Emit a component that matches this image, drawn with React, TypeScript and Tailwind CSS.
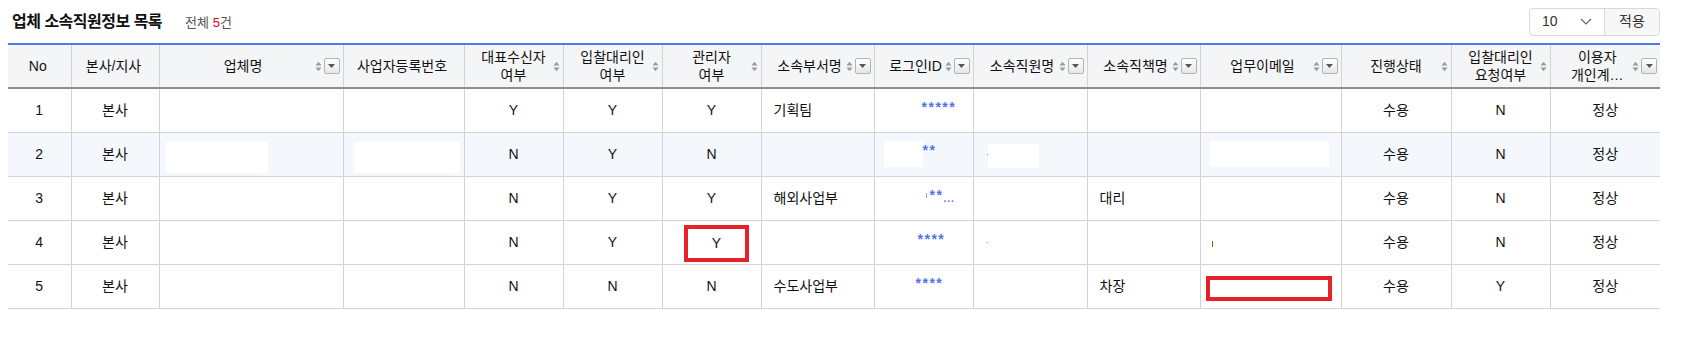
import React from "react";

type Col = {
  label: string[];
  sort?: boolean;
  filter?: boolean;
};

const cols: Col[] = [
  { label: ["No"] },
  { label: ["본사/지사"] },
  { label: ["업체명"], sort: true, filter: true },
  { label: ["사업자등록번호"] },
  { label: ["대표수신자", "여부"], sort: true },
  { label: ["입찰대리인", "여부"], sort: true },
  { label: ["관리자", "여부"], sort: true },
  { label: ["소속부서명"], sort: true, filter: true },
  { label: ["로그인ID"], sort: true, filter: true },
  { label: ["소속직원명"], sort: true, filter: true },
  { label: ["소속직책명"], sort: true, filter: true },
  { label: ["업무이메일"], sort: true, filter: true },
  { label: ["진행상태"], sort: true },
  { label: ["입찰대리인", "요청여부"], sort: true },
  { label: ["이용자", "개인계…"], sort: true, filter: true },
];

function SortIcon() {
  return (
    <svg width="7" height="11" viewBox="0 0 7 11" className="shrink-0">
      <path d="M0.5 4.5 L3.5 0.8 L6.5 4.5 Z" fill="#9b9b9b" />
      <path d="M0.5 6.5 L3.5 10.2 L6.5 6.5 Z" fill="#9b9b9b" />
    </svg>
  );
}

function FilterBox() {
  return (
    <span className="flex h-[16px] w-[16px] shrink-0 items-center justify-center rounded-[2px] border border-[#b3b3b3] bg-gradient-to-b from-white to-[#e6e6e6]">
      <svg width="7" height="4" viewBox="0 0 7 4">
        <path d="M0 0 L7 0 L3.5 4 Z" fill="#555" />
      </svg>
    </span>
  );
}

function HeadCell({ col, last }: { col: Col; last?: boolean }) {
  return (
    <th
      className={`h-[44px] bg-[#f4f5f7] p-0 font-normal border-b-2 border-b-[#8e8e8e] ${
        last ? "" : "border-r border-r-[#d3d3d3]"
      }`}
    >
      <div className="flex items-center pr-[3px]">
        {col.filter ? <span className="w-[12px] shrink-0" /> : col.sort ? <span className="w-[10px] shrink-0" /> : null}
        <div className="flex-1 text-center text-[14px] leading-[18px] text-[#111]">
          {col.label.map((l, i) => (
            <div key={i}>{l}</div>
          ))}
        </div>
        {(col.sort || col.filter) && (
          <div className="flex items-center gap-[2px]">
            {col.sort && <SortIcon />}
            {col.filter && <FilterBox />}
          </div>
        )}
      </div>
    </th>
  );
}

function Blank({ ml, w, h, mt = 0 }: { ml: string; w: string; h: string; mt?: number }) {
  return <div className={`${ml} ${w} ${h} ${mt ? "mt-[6px]" : ""} bg-white`} />;
}

function Stars({ pl, children }: { pl: string; children: React.ReactNode }) {
  return (
    <div className={`flex items-center ${pl} text-[14px] tracking-[1.5px] text-[#4f74ee] font-bold -mt-[6px]`}>
      {children}
    </div>
  );
}

type Row = React.ReactNode[];

const rows: Row[] = [
  [
    "1", "본사", "", "", "Y", "Y", "Y", "기획팀",
    <Stars pl="pl-[47px]">*****</Stars>,
    "", "", "", "수용", "N", "정상",
  ],
  [
    "2", "본사",
    <Blank ml="ml-[6px]" w="w-[102px]" h="h-[31px]" mt={1} />,
    <Blank ml="ml-[10px]" w="w-[106px]" h="h-[31px]" mt={1} />,
    "N", "Y", "N", "",
    <div className="flex items-center pl-[9px]">
      <div className="h-[26px] w-[39px] bg-white" />
      <span className="-mt-[8px] text-[14px] font-bold tracking-[1.5px] text-[#4f74ee]">**</span>
    </div>,
    <div className="flex items-center pl-[13px]">
      <span className="h-[1px] w-[1px] bg-[#8f7bd6]" />
      <div className="mt-[4px] h-[24px] w-[51px] bg-white" />
    </div>,
    "",
    <Blank ml="ml-[9px]" w="w-[119px]" h="h-[26px]" />,
    "수용", "N", "정상",
  ],
  [
    "3", "본사", "", "", "N", "Y", "Y", "해외사업부",
    <div className="-mt-[6px] flex items-center pl-[51px] text-[#4f74ee]">
      <span className="mr-[3px] h-[5px] w-[1px] bg-[#8aa0f2]" />
      <span className="text-[14px] font-bold tracking-[1.5px]">**</span>
      <span className="mt-[6px] text-[10px] font-bold tracking-[1px]">...</span>
    </div>,
    "", "대리", "", "수용", "N", "정상",
  ],
  [
    "4", "본사", "", "", "N", "Y",
    <div className="flex justify-center">
      <div className="ml-[10px] mt-[3px] flex h-[37px] w-[65px] items-center justify-center border-4 border-[#e8202a]">
        Y
      </div>
    </div>,
    "",
    <Stars pl="pl-[43px]">****</Stars>,
    <div className="flex pl-[13px]">
      <span className="h-[1px] w-[1px] bg-[#8f7bd6]" />
    </div>,
    "",
    <div className="flex pl-[11px]">
      <span className="mt-[4px] h-[6px] w-[1.5px] bg-[#9a5a16]" />
    </div>,
    "수용", "N", "정상",
  ],
  [
    "5", "본사", "", "", "N", "N", "N", "수도사업부",
    <Stars pl="pl-[41px]">****</Stars>,
    "", "차장",
    <div className="ml-[5px] mt-[4px] h-[25px] w-[126px] border-4 border-[#e8202a] bg-white" />,
    "수용", "Y", "정상",
  ],
];

export default function App() {
  return (
    <div className="h-[345px] w-[1682px] bg-white font-['Liberation_Sans','Noto_Sans_CJK_KR',sans-serif] text-[#111]">
      <div className="flex h-[43px] items-center justify-between pl-[12px] pr-[22px]">
        <div className="flex items-baseline">
          <h2 className="text-[16px] font-bold tracking-[-0.5px] text-[#111]">업체 소속직원정보 목록</h2>
          <span className="ml-[23px] text-[13px] text-[#555]">
            전체 <span className="text-[#e60012]">5</span>건
          </span>
        </div>
        <div className="flex h-[28px] items-stretch overflow-hidden rounded-[4px] border border-[#d9d9d9] text-[14px]">
          <div className="flex w-[75px] items-center justify-between border-r border-[#d9d9d9] pl-[12px] pr-[12px] text-[#333]">
            <span>10</span>
            <svg width="12" height="7" viewBox="0 0 12 7">
              <path d="M1 1 L6 6 L11 1" fill="none" stroke="#666" strokeWidth="1.2" />
            </svg>
          </div>
          <div className="flex w-[54px] items-center justify-center bg-[#f7f7f7] text-[#333]">적용</div>
        </div>
      </div>

      <table className="ml-[8px] w-[1652px] table-fixed border-collapse border-t-2 border-t-[#4a7ce8]">
        <colgroup>
          <col className="w-[63px]" />
          <col className="w-[88px]" />
          <col className="w-[184px]" />
          <col className="w-[121px]" />
          <col className="w-[99px]" />
          <col className="w-[99px]" />
          <col className="w-[99px]" />
          <col className="w-[113px]" />
          <col className="w-[99px]" />
          <col className="w-[114px]" />
          <col className="w-[113px]" />
          <col className="w-[141px]" />
          <col className="w-[110px]" />
          <col className="w-[99px]" />
          <col className="w-[110px]" />
        </colgroup>
        <thead>
          <tr>
            {cols.map((c, i) => (
              <HeadCell key={i} col={c} last={i === cols.length - 1} />
            ))}
          </tr>
        </thead>
        <tbody>
          {rows.map((r, ri) => (
            <tr key={ri} className={ri === 1 ? "bg-[#f4f8fd]" : "bg-white"}>
              {r.map((cell, ci) => {
                const left = ci === 7 || ci === 10;
                const last = ci === r.length - 1;
                return (
                  <td
                    key={ci}
                    className={`h-[44px] p-0 text-[14px] border-b border-b-[#d3d3d3] ${
                      last ? "" : "border-r border-r-[#d3d3d3]"
                    } ${left ? "pl-[12px] text-left" : typeof cell === "string" ? "text-center" : ""}`}
                  >
                    {cell}
                  </td>
                );
              })}
            </tr>
          ))}
        </tbody>
      </table>
    </div>
  );
}
